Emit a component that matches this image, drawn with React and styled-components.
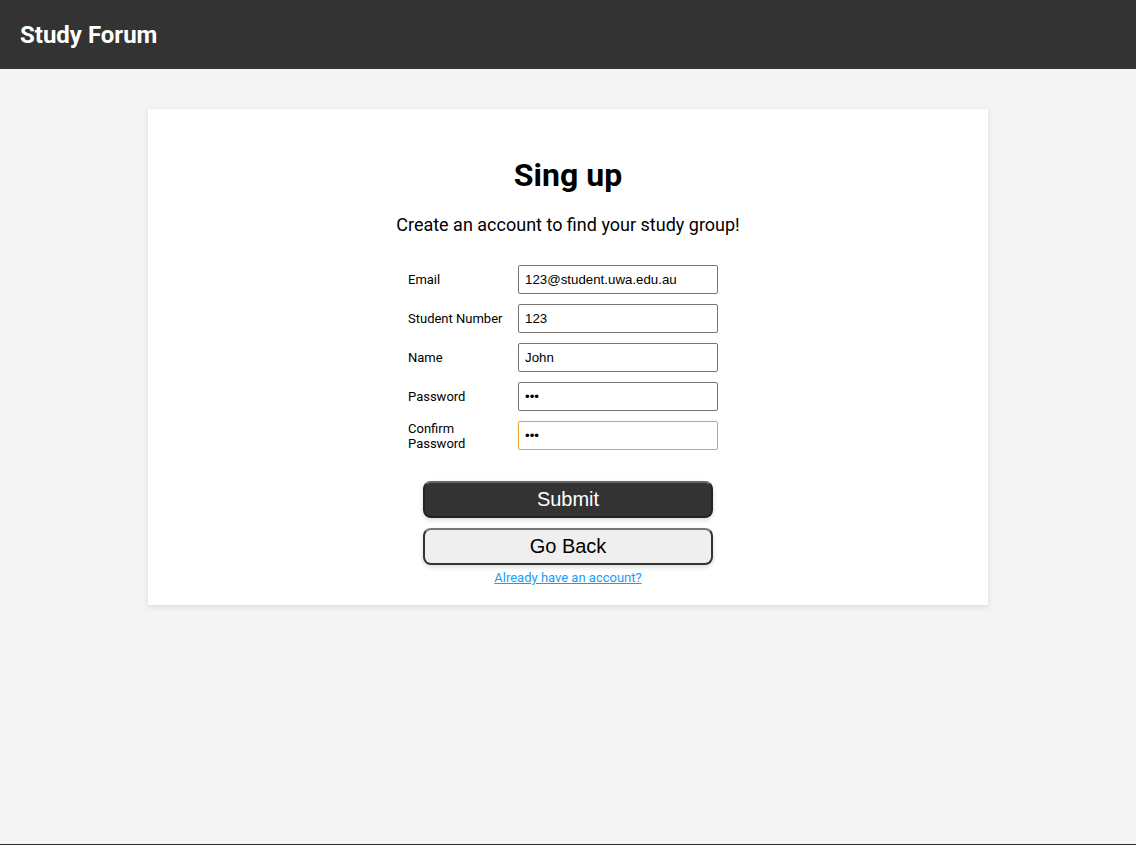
import React from "react";
import styled, { createGlobalStyle } from "styled-components";

const GlobalStyle = createGlobalStyle`
    html, body {
        margin: 0;
        padding: 0;
        background: #f4f4f4;
        font-family: Roboto, "Liberation Sans", Arial, sans-serif;
    }
`;

const Page = styled.div`
    min-height: 100vh;
    display: flex;
    flex-direction: column;
    box-sizing: border-box;
    border-bottom: 1px solid #2a2a2a;
`;

const Header = styled.header`
    height: 69px;
    background: #333333;
    display: flex;
    align-items: center;
    padding: 0 20px;
    box-sizing: border-box;
`;

const Brand = styled.div`
    color: #ffffff;
    font-size: 24px;
    font-weight: 700;
`;

const Main = styled.main`
    flex: 1;
    display: flex;
    justify-content: center;
    padding-top: 40px;
`;

const Card = styled.div`
    width: 840px;
    height: 496px;
    box-sizing: border-box;
    background: #ffffff;
    box-shadow: 0 2px 6px rgba(0, 0, 0, 0.1);
    display: flex;
    flex-direction: column;
    align-items: center;
    padding-top: 46px;
`;

const Title = styled.h1`
    margin: 0;
    font-size: 32px;
    line-height: 40px;
    font-weight: 700;
    color: #000;
`;

const Subtitle = styled.p`
    margin: 18px 0 0;
    font-size: 18px;
    line-height: 24px;
    color: #000;
`;

const Form = styled.div`
    margin-top: 28px;
    width: 320px;
    display: grid;
    grid-template-columns: 110px 200px;
    row-gap: 10px;
    align-items: center;
`;

const Label = styled.label`
    width: 100px;
    font-size: 13px;
    line-height: 15px;
    color: #000;
`;

const Input = styled.input`
    align-self: start;
    width: 200px;
    height: 29px;
    box-sizing: border-box;
    border: 1px solid ${(p) => (p.$focused ? "#f0a030" : "#767676")};
    border-radius: 2px;
    padding: 0 6px;
    font-family: "Liberation Sans", Arial, sans-serif;
    font-size: 13.3px;
    color: #000;
    outline: none;
`;

const Actions = styled.div`
    margin-top: 30px;
    display: flex;
    flex-direction: column;
    align-items: center;
    gap: 10px;
`;

const Button = styled.button`
    width: 290px;
    height: 37px;
    border-radius: 8px;
    border: 2px solid ${(p) => (p.$dark ? "#222" : "#333")};
    border-top-color: ${(p) => (p.$dark ? "#666" : "#777")};
    background: ${(p) => (p.$dark ? "#333333" : "#efefef")};
    color: ${(p) => (p.$dark ? "#ffffff" : "#000000")};
    font-family: "Liberation Sans", Arial, sans-serif;
    font-size: 20px;
    box-shadow: 0 2px 5px rgba(0, 0, 0, 0.15);
    cursor: pointer;
`;

const LoginLink = styled.a`
    margin-top: -5px;
    font-size: 13px;
    color: #1a9cf5;
    text-decoration: underline;
`;

const fields = [
    { label: "Email", type: "text", value: "123@student.uwa.edu.au" },
    { label: "Student Number", type: "text", value: "123" },
    { label: "Name", type: "text", value: "John" },
    { label: "Password", type: "password", value: "123" },
    { label: "Confirm Password", type: "password", value: "123", focused: true },
];

function App() {
    return (
        <Page>
            <GlobalStyle />
            <Header>
                <Brand>Study Forum</Brand>
            </Header>
            <Main>
                <Card>
                    <Title>Sing up</Title>
                    <Subtitle>Create an account to find your study group!</Subtitle>
                    <Form>
                        {fields.map((f) => (
                            <React.Fragment key={f.label}>
                                <Label>{f.label}</Label>
                                <Input
                                    type={f.type}
                                    defaultValue={f.value}
                                    $focused={f.focused}
                                />
                            </React.Fragment>
                        ))}
                    </Form>
                    <Actions>
                        <Button $dark>Submit</Button>
                        <Button>Go Back</Button>
                        <LoginLink href="#">Already have an account?</LoginLink>
                    </Actions>
                </Card>
            </Main>
        </Page>
    );
}

export default App;
